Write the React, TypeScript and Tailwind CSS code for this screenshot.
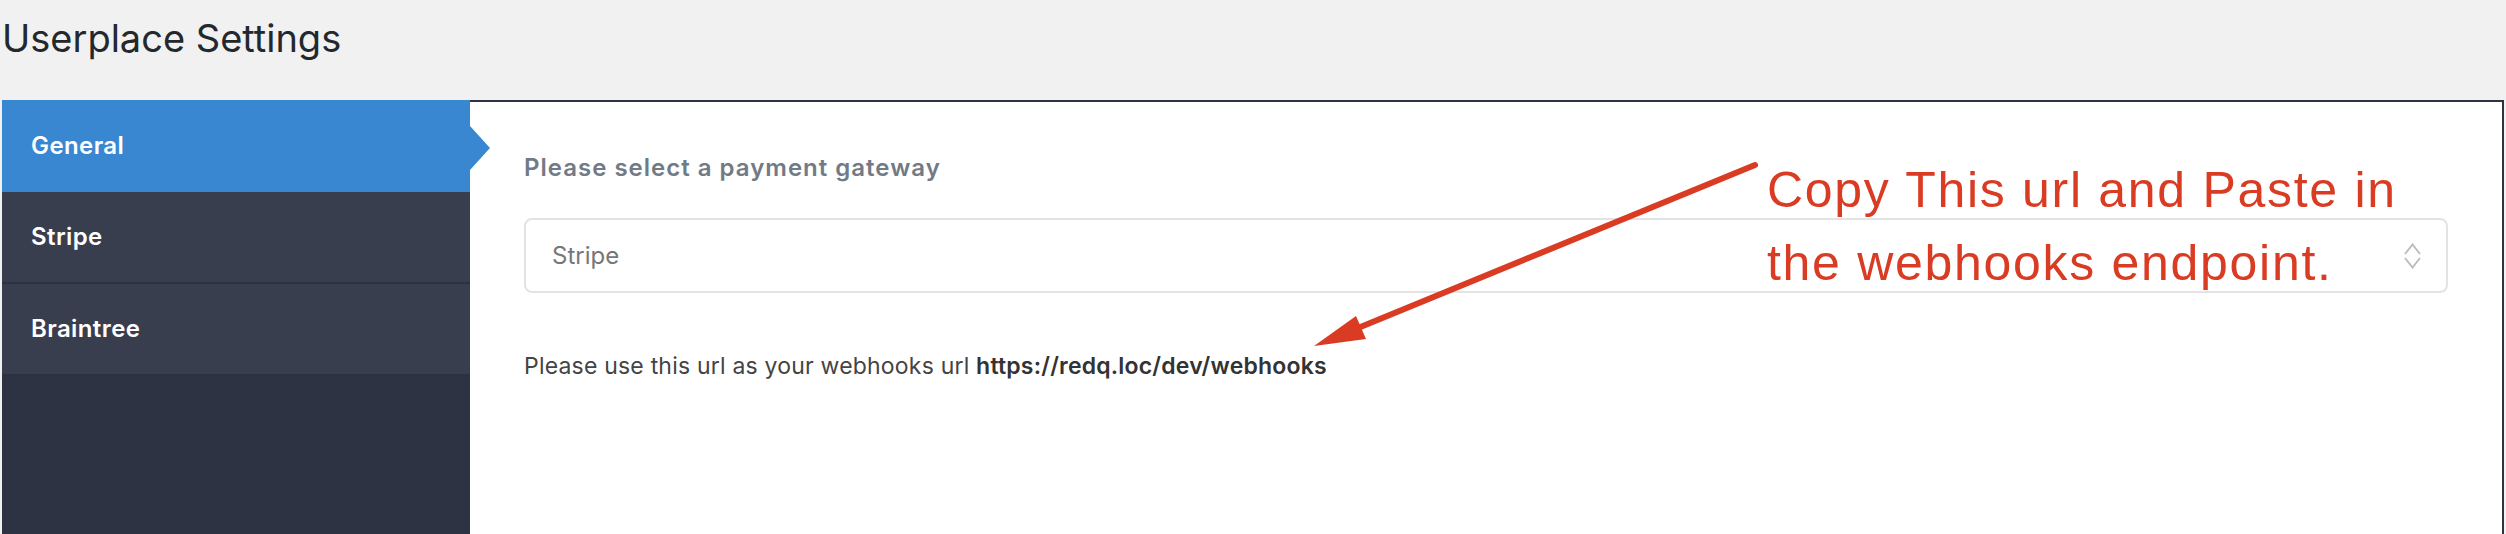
import { ReactNode } from "react"

const font = { fontFamily: "Inter, 'Noto Sans', sans-serif" }

function NavItem({ label, active, children }: { label: string; active?: boolean; children?: ReactNode }) {
    return (
        <div
            className={
                active
                    ? "relative flex items-center h-[92px] pl-[29px] bg-[#3a87d1] text-white text-[24px] tracking-[0.4px] font-semibold"
                    : "relative flex items-center h-[92px] pl-[29px] bg-[#383e4e] border-b-2 border-[#2d3241] text-white text-[24px] tracking-[0.4px] font-semibold"
            }
        >
            {label}
            {children}
        </div>
    )
}

export default function App() {
    return (
        <div className="relative w-[2506px] h-[534px] overflow-hidden bg-[#f1f1f1] flex flex-col" style={font}>
            <div className="h-[100px] pt-[16px] pl-[2px] shrink-0">
                <h1 className="text-[38px] leading-[44px] text-[#23282d] font-normal">Userplace Settings</h1>
            </div>
            <div className="flex flex-1 mx-[2px]">
                <div className="w-[468px] shrink-0 bg-[#2e3343] flex flex-col">
                    <NavItem label="General" active>
                        <span className="absolute right-[-20px] top-[26px] w-0 h-0 border-y-[22px] border-y-transparent border-l-[20px] border-l-[#3a87d1]" />
                    </NavItem>
                    <NavItem label="Stripe" />
                    <NavItem label="Braintree" />
                </div>
                <div className="flex-1 bg-white border-t-2 border-r-2 border-[#2e3343] pl-[54px] pr-[54px] pt-[50px]">
                    <p className="text-[24px] leading-[32px] tracking-[1px] font-semibold text-[#727a86]">
                        Please select a payment gateway
                    </p>
                    <div className="mt-[34px] h-[75px] border-2 border-[#e3e3e3] rounded-[8px] flex items-center justify-between pl-[26px] pr-[25px]">
                        <span className="text-[24px] text-[#777777]">Stripe</span>
                        <svg width="17" height="26" viewBox="0 0 17 26" fill="none" stroke="#bdbdbd" strokeWidth="2">
                            <path d="M1 11 L8.5 1.5 L16 11" />
                            <path d="M1 15 L8.5 24.5 L16 15" />
                        </svg>
                    </div>
                    <p className="mt-[58px] text-[23px] leading-[30px] tracking-[0.2px] text-[#444444]">
                        Please use this url as your webhooks url{" "}
                        <span className="font-semibold text-[#333333]">https://redq.loc/dev/webhooks</span>
                    </p>
                </div>
            </div>

            {/* annotation over the screenshot */}
            <svg className="absolute left-0 top-0 pointer-events-none" width="2506" height="534">
                <line x1="1755" y1="165" x2="1358" y2="328" stroke="#da3b23" strokeWidth="6" strokeLinecap="round" />
                <polygon points="1314,346 1356,316 1366,339" fill="#da3b23" />
            </svg>
            <div
                className="absolute left-[1767px] top-[154px] text-[50px] leading-[73px] tracking-[1.7px] text-[#da3b23]"
                style={{ fontFamily: "'Liberation Sans', Arial, sans-serif" }}
            >
                Copy This url and Paste in
                <br />
                the webhooks endpoint.
            </div>
        </div>
    )
}
